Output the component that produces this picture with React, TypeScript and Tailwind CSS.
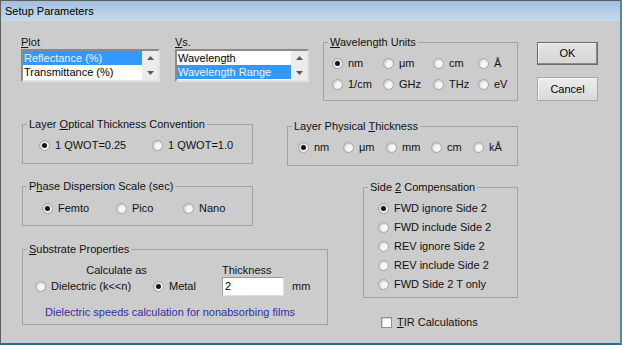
import type { ReactNode } from 'react';

// Win7 style "Setup Parameters" dialog

function Radio({ checked = false }: { checked?: boolean }) {
  return (
    <span className="w-[11px] h-[11px] shrink-0 rounded-full border border-[#a2a2a2] bg-[#f6f6f6] shadow-[inset_1px_1px_2px_#c9c9c9] flex items-center justify-center">
      {checked && <span className="w-[5px] h-[5px] rounded-full bg-[#141414]" />}
    </span>
  );
}

function Option({ checked, children, className = '' }: { checked?: boolean; children: ReactNode; className?: string }) {
  return (
    <span className={`flex items-center gap-[5px] ${className}`}>
      <Radio checked={checked} />
      <span>{children}</span>
    </span>
  );
}

function Group({ title, className, children }: { title: ReactNode; className: string; children: ReactNode }) {
  return (
    <fieldset className={`border border-[#a3a3a3] ${className}`}>
      <legend className="ml-[4px] px-[2px] leading-[14px]">{title}</legend>
      {children}
    </fieldset>
  );
}

function ScrollArrows() {
  return (
    <div className="w-[16px] h-full bg-[#ececec] flex flex-col items-center justify-between py-[5px]">
      <svg width="7" height="4" viewBox="0 0 7 4">
        <path d="M0 4 L3.5 0 L7 4 Z" fill="#5a5a5a" />
      </svg>
      <svg width="7" height="4" viewBox="0 0 7 4">
        <path d="M0 0 L3.5 4 L7 0 Z" fill="#5a5a5a" />
      </svg>
    </div>
  );
}

function ListBox({ items, selected }: { items: string[]; selected: number }) {
  return (
    <div className="h-[33px] flex bg-white border-2 border-t-[#8a8a8a] border-l-[#8a8a8a] border-r-[#e2e2e2] border-b-[#e2e2e2]">
      <div className="flex-1">
        {items.map((it, i) => (
          <div
            key={it}
            className={`h-[14px] leading-[14px] pl-[1px] ${i === selected ? 'bg-[#3399ff] text-[#eef5ff]' : 'text-black'}`}
          >
            {it}
          </div>
        ))}
      </div>
      <ScrollArrows />
    </div>
  );
}

export default function App() {
  return (
    <div className="w-[622px] h-[345px] overflow-hidden flex flex-col bg-[#cccccc] text-[11px] text-[#111] font-['Liberation_Sans',Arial,sans-serif] border-l border-t border-[#5e5e5e] border-r-2 border-r-[#3a93c6] border-b-2 border-b-[#2a6e8e]">
      {/* Title bar */}
      <div className="h-[20px] shrink-0 flex items-center pl-[4px] bg-gradient-to-b from-[#a3bfdd] to-[#c7dbef] text-black">
        Setup Parameters
      </div>

      <div className="flex-1 pl-[20px]">
        {/* Row 1 */}
        <div className="flex items-start mt-[14px]">
          <div className="w-[139px]">
            <div className="h-[14px] leading-[14px]">
              <u>P</u>lot
            </div>
            <ListBox items={['Reflectance (%)', 'Transmittance (%)']} selected={0} />
          </div>
          <div className="w-[134px] ml-[15px]">
            <div className="h-[14px] leading-[14px]">
              <u>V</u>s.
            </div>
            <ListBox items={['Wavelength', 'Wavelength Range']} selected={1} />
          </div>
          <Group
            className="w-[195px] h-[66px] ml-[14px]"
            title={
              <>
                <u>W</u>avelength Units
              </>
            }
          >
            <div className="grid grid-cols-[51px_50px_45px_auto] pl-[8px] pt-[4px]">
              {['nm', 'μm', 'cm', 'Å', '1/cm', 'GHz', 'THz', 'eV'].map((u, i) => (
                <Option key={u} checked={i === 0} className="h-[21px]">
                  {u}
                </Option>
              ))}
            </div>
          </Group>
          <div className="w-[61px] ml-[19px] mt-[7px] flex flex-col">
            <button className="h-[23px] border border-[#6a6a6a] shadow-[inset_-1px_-1px_0_#8a8a8a,inset_1px_1px_0_#f2f2f2] bg-gradient-to-b from-[#e4e4e4] to-[#d6d6d6] text-black">
              OK
            </button>
            <button className="h-[24px] mt-[12px] border border-[#a8a8a8] shadow-[inset_1px_1px_0_#f6f6f6] bg-gradient-to-b from-[#ececec] to-[#dadada] text-black">
              Cancel
            </button>
          </div>
        </div>

        {/* Row 2 */}
        <div className="flex items-start mt-[16px]">
          <Group
            className="w-[231px] h-[47px] ml-[1px]"
            title={
              <>
                Layer <u>O</u>ptical Thickness Convention
              </>
            }
          >
            <div className="flex pl-[16px] pt-[4px] h-[24px]">
              <Option checked className="w-[113px]">
                1 QWOT=0.25
              </Option>
              <Option>1 QWOT=1.0</Option>
            </div>
          </Group>
          <Group
            className="w-[231px] h-[47px] ml-[34px] mt-[2px]"
            title={
              <>
                Layer Physical <u>T</u>hickness
              </>
            }
          >
            <div className="flex pl-[10px] pt-[4px] h-[24px]">
              <Option checked className="w-[45px]">
                nm
              </Option>
              <Option className="w-[43px]">μm</Option>
              <Option className="w-[45px]">mm</Option>
              <Option className="w-[42px]">cm</Option>
              <Option>kÅ</Option>
            </div>
          </Group>
        </div>

        {/* Row 3 */}
        <div className="flex items-start mt-[13px]">
          <div className="flex flex-col">
            <Group
              className="w-[231px] h-[47px] ml-[1px]"
              title={
                <>
                  P<u>h</u>ase Dispersion Scale (sec)
                </>
              }
            >
              <div className="flex pl-[19px] pt-[5px] h-[25px]">
                <Option checked className="w-[74px]">
                  Femto
                </Option>
                <Option className="w-[67px]">Pico</Option>
                <Option>Nano</Option>
              </div>
            </Group>
            <Group
              className="w-[306px] h-[83px] ml-[1px] mt-[16px]"
              title={
                <>
                  <u>S</u>ubstrate Properties
                </>
              }
            >
              <div className="flex pl-[12px] pt-[8px]">
                <div className="w-[163px] flex flex-col items-center">
                  <div className="h-[13px] leading-[13px]">Calculate as</div>
                  <div className="h-[19px] w-full flex items-center">
                    <Option className="w-[118px]">Dielectric (k&lt;&lt;n)</Option>
                    <Option checked>Metal</Option>
                  </div>
                </div>
                <div className="ml-[24px] flex flex-col">
                  <div className="h-[13px] leading-[13px]">Thickness</div>
                  <div className="h-[19px] flex items-center">
                    <div className="w-[62px] h-[19px] bg-white border border-[#9b9b9b] border-b-[#dedede] border-r-[#dedede] pl-[2px] leading-[17px] text-black">
                      2
                    </div>
                    <span className="ml-[8px]">mm</span>
                  </div>
                </div>
              </div>
              <div className="pl-[22px] mt-[9px] h-[14px] leading-[14px] text-[#2e2ea3]">
                Dielectric speeds calculation for nonabsorbing films
              </div>
            </Group>
          </div>

          <div className="flex flex-col ml-[35px]">
            <Group
              className="w-[155px] h-[118px] mt-[1px]"
              title={
                <>
                  Side <u>2</u> Compensation
                </>
              }
            >
              <div className="flex flex-col pl-[14px] pt-[5px]">
                {['FWD ignore Side 2', 'FWD include Side 2', 'REV ignore Side 2', 'REV include Side 2', 'FWD Side 2 T only'].map(
                  (s, i) => (
                    <Option key={s} checked={i === 0} className="h-[19px]">
                      {s}
                    </Option>
                  )
                )}
              </div>
            </Group>
            <div className="flex items-center gap-[5px] ml-[18px] mt-[17px] h-[14px]">
              <span className="w-[11px] h-[11px] bg-white border border-[#8e8e8e] shadow-[inset_1px_1px_1px_#d0d0d0]" />
              <span>
                <u>T</u>IR Calculations
              </span>
            </div>
          </div>
        </div>
      </div>
    </div>
  );
}
